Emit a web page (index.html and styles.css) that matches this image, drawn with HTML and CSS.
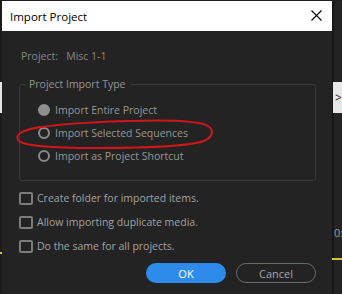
FILE: index.html
```html
<!DOCTYPE html>
<html lang="en">
<head>
  <meta charset="UTF-8">
  <title>Import Project</title>
  <link rel="stylesheet" href="styles.css">
</head>
<body>

<div class="screen">
  <div class="edge-left">
    <div class="edge-tab"></div>
    <div class="edge-mark"></div>
  </div>

  <div class="dialog">
    <div class="titlebar">
      <span class="title">Import Project</span>
      <svg class="close" width="11" height="11" viewBox="0 0 11 11">
        <path d="M0.5 0.5 L10.5 10.5 M10.5 0.5 L0.5 10.5" stroke="#000" stroke-width="1.1" fill="none"/>
      </svg>
    </div>

    <div class="content">
      <div class="project-line">Project:&nbsp;&nbsp; Misc 1-1</div>

      <fieldset class="group">
        <legend>Project Import Type</legend>
        <div class="option">
          <span class="radio filled"></span>
          <span>Import Entire Project</span>
        </div>
        <div class="option">
          <span class="radio"></span>
          <span>Import Selected Sequences</span>
        </div>
        <div class="option">
          <span class="radio"></span>
          <span>Import as Project Shortcut</span>
        </div>
      </fieldset>

      <div class="checks">
        <div class="check-row"><span class="box"></span><span>Create folder for imported items.</span></div>
        <div class="check-row"><span class="box"></span><span>Allow importing duplicate media.</span></div>
        <div class="check-row"><span class="box"></span><span>Do the same for all projects.</span></div>
      </div>

      <div class="buttons">
        <button class="btn btn-ok">OK</button>
        <button class="btn btn-cancel">Cancel</button>
      </div>
    </div>
  </div>

  <div class="edge-right">
    <div class="side-tab">&gt;</div>
    <div class="timecode">0:</div>
    <div class="playhead"></div>
  </div>

  <!-- red marker drawn over the dialog -->
  <svg class="scribble" width="342" height="294" viewBox="0 0 342 294">
    <path d="M24 131 C45 124, 90 122, 130 121 C165 120, 198 120, 208 126 C214 130, 213 136, 206 140 C192 147, 140 148, 95 148 C60 148, 26 147, 19 141 C14 136, 20 130, 40 127"
          stroke="#d0161a" stroke-width="2" fill="none" stroke-linecap="round"/>
  </svg>
</div>

</body>
</html>
```

FILE: styles.css
```css
body {
  margin: 0;
  background: #1e1e1e;
  font-family: 'Open Sans', 'Noto Sans', sans-serif;
  font-size: 10.5px;
}

.screen {
  position: relative;
  display: flex;
  width: 342px;
  height: 294px;
  overflow: hidden;
  padding-top: 1px;
  box-sizing: border-box;
}

.edge-left {
  width: 2px;
  background: #1b1b1b;
}

.edge-tab {
  margin-top: 81px;
  height: 31px;
  background: #e6e6e6;
}

.edge-mark {
  margin-top: 139px;
  height: 2px;
  background: #cfc63a;
}

.dialog {
  width: 330px;
  background: #232323;
}

.titlebar {
  height: 30px;
  background: #fff;
  display: flex;
  align-items: center;
  justify-content: space-between;
  padding: 0 10px 0 8px;
}

.title {
  font-size: 11.5px;
  color: #000;
}

.close {
  margin-top: -1px;
}

.content {
  padding: 0 16px 0 17px;
}

.project-line {
  margin-top: 17px;
  height: 16px;
  line-height: 16px;
  padding-left: 2px;
  color: #878787;
}

.group {
  margin: 13px 0 0 0;
  padding: 7px 0 13px 6px;
  border: 1px solid #383838;
  border-radius: 3px;
}

.group legend {
  padding: 0 4px 0 3px;
  line-height: 14px;
  color: #939393;
}

.option {
  display: flex;
  align-items: center;
  height: 23px;
  margin-left: 12px;
  color: #979797;
}

.radio {
  width: 12px;
  height: 12px;
  box-sizing: border-box;
  border: 2px solid #8a8a8a;
  border-radius: 50%;
  margin-right: 5px;
}

.radio.filled {
  background: #8f8f8f;
  border-color: #8f8f8f;
}

.checks {
  margin-top: 5px;
}

.check-row {
  display: flex;
  align-items: center;
  height: 24px;
  color: #a2a2a2;
}

.box {
  width: 14px;
  height: 13px;
  box-sizing: border-box;
  border: 2px solid #7c7c7c;
  border-radius: 2px;
  margin-right: 4px;
}

.buttons {
  display: flex;
  justify-content: flex-end;
  gap: 10px;
  margin-top: 5px;
}

.btn {
  width: 80px;
  height: 20px;
  border-radius: 10px;
  font-family: 'Open Sans', 'Noto Sans', sans-serif;
  font-size: 11px;
  padding: 0;
}

.btn-ok {
  background: #2d8ceb;
  border: none;
  color: #fff;
}

.btn-cancel {
  background: transparent;
  border: 1.5px solid #6a6a6a;
  color: #a6a6a6;
}

.edge-right {
  width: 10px;
  background: #232323;
  border-left: 2px solid #171717;
  box-sizing: border-box;
}

.side-tab {
  margin-top: 81px;
  margin-left: -1px;
  height: 31px;
  background: #e8e8e8;
  color: #222;
  font-size: 12px;
  line-height: 31px;
  padding-left: 2px;
}

.timecode {
  margin-top: 113px;
  color: #9a9a9a;
  font-size: 11px;
  line-height: 14px;
}

.playhead {
  margin-top: 18px;
  height: 2px;
  margin-left: -2px;
  background: #cfc63a;
}

.scribble {
  position: absolute;
  left: 0;
  top: 0;
  pointer-events: none;
}
```
